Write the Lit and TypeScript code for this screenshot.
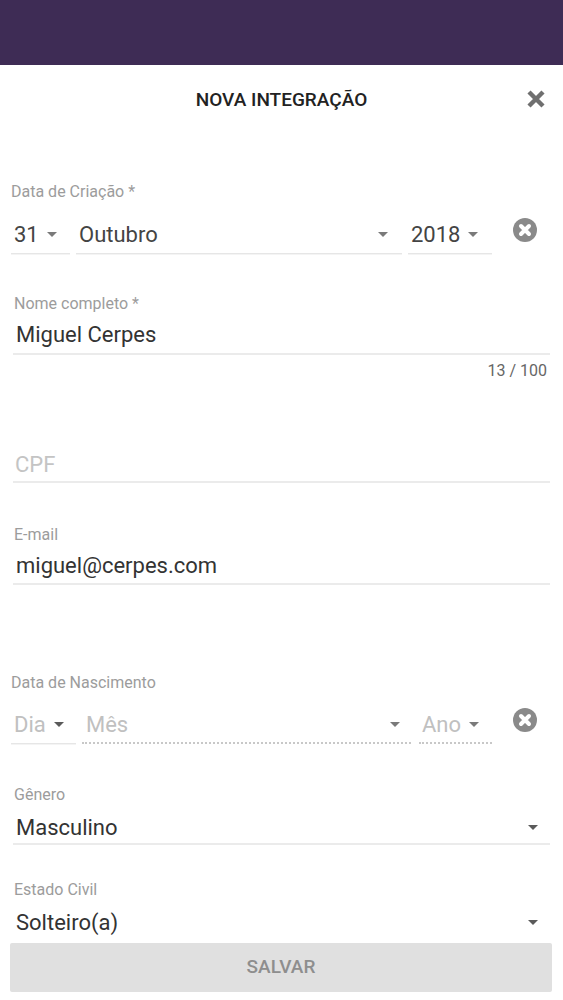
import { LitElement, html, css } from "lit";
import { customElement } from "lit/decorators.js";

const arrow = (cls = "") => html`<svg class="arrow ${cls}" viewBox="0 0 10 5"><path d="M0 0h10L5 5z"/></svg>`;
const clear = html`<svg class="clear" viewBox="0 0 24 24"><circle cx="12" cy="12" r="12" fill="#8a8a8a"/><path d="M8 8l8 8M16 8l-8 8" stroke="#fff" stroke-width="4" stroke-linecap="round"/></svg>`;

@customElement("app-root")
export class AppRoot extends LitElement {
  static styles = css`
    :host { display: block; width: 563px; height: 1000px; overflow: hidden; background: #fff; font-family: Roboto, "Liberation Sans", sans-serif; color: #3a3a3a; }
    .top { height: 65px; background: #3e2c55; }
    .title-row { height: 68px; display: grid; grid-template-columns: 1fr auto 1fr; align-items: center; }
    .title { grid-column: 2; font-size: 19px; font-weight: 500; color: #222; white-space: nowrap; }
    .close { grid-column: 3; justify-self: end; width: 18px; height: 18px; margin-right: 18px; display: block; }
    .form { display: flex; flex-direction: column; }
    .label { font-size: 16px; line-height: 20px; padding-top: 1px; height: 19px; color: #9c9c9c; white-space: nowrap; }
    .date { margin-top: 48px; padding-left: 11px; }
    .date2 { margin-top: 87px; padding-left: 11px; }
    .daterow { display: flex; margin-top: 14px; position: relative; }
    .date2 .daterow { margin-top: 13px; }
    .part { height: 39px; padding-top: 1px; border-bottom: 1px solid #e6e6e6; box-shadow: 0 1px 0 #f4f4f4; display: flex; align-items: center; justify-content: space-between; box-sizing: border-box; font-size: 22px; color: #444; }
    .d { width: 59px; padding-left: 3px; margin-right: 6px; padding-right: 13px; }
    .m { width: 326px; padding-left: 3px; margin-right: 6px; padding-right: 14px; }
    .y { width: 84px; padding-left: 3px; padding-right: 14px; }
    .date2 .part { color: #c0c0c0; }
    .date2 .d { width: 65px; margin-right: 6px; padding-right: 12px; }
    .date2 .m { width: 329px; margin-right: 8px; padding-left: 4px; padding-right: 11px; border-bottom: 2px dotted #c8c8c8; box-shadow: none; }
    .date2 .y { width: 73px; padding-left: 3px; padding-right: 13px; border-bottom: 2px dotted #c8c8c8; box-shadow: none; }
    .arrow { width: 10px; height: 5px; fill: #7a7a7a; flex: none; display: block; }
    .dark { fill: #5a5a5a; }
    .clear { width: 24px; height: 24px; display: block; position: absolute; left: 502px; top: 3px; }
    .field { padding: 0 13px; }
    .field .label { padding-left: 1px; }
    .value { display: flex; align-items: center; justify-content: space-between; padding: 0 12px 0 3px; font-size: 22px; color: #333; border-bottom: 2px solid #ebebeb; box-sizing: content-box; }
    .nome { margin-top: 39px; }
    .nome .value { padding-top: 2px; height: 38px; }
    .counter { height: 19px; margin-top: 6px; font-size: 16px; line-height: 20px; text-align: right; padding-right: 3px; color: #666; }
    .cpf { margin-top: 65px; }
    .cpf .value { padding-top: 2px; height: 34px; padding-left: 2px; color: #c4c4c4; }
    .email { margin-top: 41px; }
    .email .value { padding-top: 3px; height: 36px; }
    .genero { margin-top: 40px; }
    .genero .value { padding-top: 7px; height: 32px; }
    .estado { margin-top: 34px; }
    .estado .value { border-bottom: 0; padding-top: 2px; height: 42px; }
    .save { margin: 0 11px 0 10px; height: 49px; box-sizing: border-box; padding-bottom: 2px; display: flex; align-items: center; justify-content: center; background: #e0e0e0; border-radius: 2px; font-size: 19px; font-weight: 500; color: #8e8e8e; }
  `;

  render() {
    return html`
      <div class="top"></div>
      <div class="title-row">
        <div class="title">NOVA INTEGRAÇÃO</div>
        <svg class="close" viewBox="0 0 18 18"><path d="M2 2l14 14M16 2L2 16" stroke="#6f6f6f" stroke-width="4.4" fill="none"/></svg>
      </div>
      <div class="form">
        <div class="date">
          <div class="label">Data de Criação *</div>
          <div class="daterow">
            <div class="part d">31${arrow()}</div>
            <div class="part m">Outubro${arrow()}</div>
            <div class="part y">2018${arrow()}</div>
            ${clear}
          </div>
        </div>
        <div class="field nome">
          <div class="label">Nome completo *</div>
          <div class="value">Miguel Cerpes</div>
          <div class="counter">13 / 100</div>
        </div>
        <div class="field cpf"><div class="value">CPF</div></div>
        <div class="field email">
          <div class="label">E-mail</div>
          <div class="value">miguel@cerpes.com</div>
        </div>
        <div class="date2">
          <div class="label">Data de Nascimento</div>
          <div class="daterow">
            <div class="part d">Dia${arrow("dark")}</div>
            <div class="part m">Mês${arrow()}</div>
            <div class="part y">Ano${arrow()}</div>
            ${clear}
          </div>
        </div>
        <div class="field genero">
          <div class="label">Gênero</div>
          <div class="value">Masculino${arrow("dark")}</div>
        </div>
        <div class="field estado">
          <div class="label">Estado Civil</div>
          <div class="value">Solteiro(a)${arrow("dark")}</div>
        </div>
        <div class="save">SALVAR</div>
      </div>
    `;
  }
}
